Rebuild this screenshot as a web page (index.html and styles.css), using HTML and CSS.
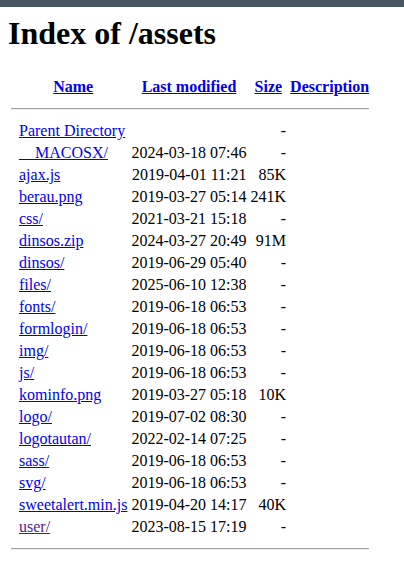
FILE: index.html
```html
<!DOCTYPE html>
<html>
<head>
<meta charset="utf-8">
<title>Index of /assets</title>
<link rel="stylesheet" href="styles.css">
</head>
<body>
<div class="topbar"></div>
<div class="page">
<h1 class="title">Index of /assets</h1>
<table class="listing">
<tr><th class="icon">&nbsp;</th><th><a href="#">Name</a></th><th><a href="#">Last modified</a></th><th><a href="#">Size</a></th><th><a href="#">Description</a></th></tr>
<tr><th class="sep" colspan="5"><hr></th></tr>
<tr><td class="icon">&nbsp;</td><td><a href="#">Parent Directory</a></td><td>&nbsp;</td><td class="r">- </td><td>&nbsp;</td></tr>
<tr><td class="icon">&nbsp;</td><td><a href="#">__MACOSX/</a></td><td class="r">2024-03-18 07:46</td><td class="r">- </td><td>&nbsp;</td></tr>
<tr><td class="icon">&nbsp;</td><td><a href="#">ajax.js</a></td><td class="r">2019-04-01 11:21</td><td class="r">85K</td><td>&nbsp;</td></tr>
<tr><td class="icon">&nbsp;</td><td><a href="#">berau.png</a></td><td class="r">2019-03-27 05:14</td><td class="r">241K</td><td>&nbsp;</td></tr>
<tr><td class="icon">&nbsp;</td><td><a href="#">css/</a></td><td class="r">2021-03-21 15:18</td><td class="r">- </td><td>&nbsp;</td></tr>
<tr><td class="icon">&nbsp;</td><td><a href="#">dinsos.zip</a></td><td class="r">2024-03-27 20:49</td><td class="r">91M</td><td>&nbsp;</td></tr>
<tr><td class="icon">&nbsp;</td><td><a href="#">dinsos/</a></td><td class="r">2019-06-29 05:40</td><td class="r">- </td><td>&nbsp;</td></tr>
<tr><td class="icon">&nbsp;</td><td><a href="#">files/</a></td><td class="r">2025-06-10 12:38</td><td class="r">- </td><td>&nbsp;</td></tr>
<tr><td class="icon">&nbsp;</td><td><a href="#">fonts/</a></td><td class="r">2019-06-18 06:53</td><td class="r">- </td><td>&nbsp;</td></tr>
<tr><td class="icon">&nbsp;</td><td><a href="#">formlogin/</a></td><td class="r">2019-06-18 06:53</td><td class="r">- </td><td>&nbsp;</td></tr>
<tr><td class="icon">&nbsp;</td><td><a href="#">img/</a></td><td class="r">2019-06-18 06:53</td><td class="r">- </td><td>&nbsp;</td></tr>
<tr><td class="icon">&nbsp;</td><td><a href="#">js/</a></td><td class="r">2019-06-18 06:53</td><td class="r">- </td><td>&nbsp;</td></tr>
<tr><td class="icon">&nbsp;</td><td><a href="#">kominfo.png</a></td><td class="r">2019-03-27 05:18</td><td class="r">10K</td><td>&nbsp;</td></tr>
<tr><td class="icon">&nbsp;</td><td><a href="#">logo/</a></td><td class="r">2019-07-02 08:30</td><td class="r">- </td><td>&nbsp;</td></tr>
<tr><td class="icon">&nbsp;</td><td><a href="#">logotautan/</a></td><td class="r">2022-02-14 07:25</td><td class="r">- </td><td>&nbsp;</td></tr>
<tr><td class="icon">&nbsp;</td><td><a href="#">sass/</a></td><td class="r">2019-06-18 06:53</td><td class="r">- </td><td>&nbsp;</td></tr>
<tr><td class="icon">&nbsp;</td><td><a href="#">svg/</a></td><td class="r">2019-06-18 06:53</td><td class="r">- </td><td>&nbsp;</td></tr>
<tr><td class="icon">&nbsp;</td><td><a href="#">sweetalert.min.js</a></td><td class="r">2019-04-20 14:17</td><td class="r">40K</td><td>&nbsp;</td></tr>
<tr><td class="icon">&nbsp;</td><td><a class="visited" href="#">user/</a></td><td class="r">2023-08-15 17:19</td><td class="r">- </td><td>&nbsp;</td></tr>
<tr><th class="sep" colspan="5"><hr></th></tr>
</table>
</div>
</body>
</html>
```
FILE: styles.css
```css
html, body {
  margin: 0;
  padding: 0;
  background: #ffffff;
}
body {
  font-family: "Liberation Serif", "Times New Roman", serif;
  font-size: 16px;
  color: #000000;
}
.topbar {
  height: 7px;
  background: #46555f;
}
.page {
  padding: 0 8px;
}
.title {
  font-size: 32px;
  font-weight: bold;
  margin: 8px 0 23px;
}
.listing a {
  color: #0000ee;
  text-decoration: underline;
}
.listing a.visited {
  color: #551a8b;
}
.listing th, .listing td {
  padding: 1px;
}
.listing th {
  text-align: center;
  font-weight: bold;
}
.listing td {
  text-align: left;
}
.listing td.r {
  text-align: right;
}
.listing hr {
  margin: 8px 0;
  border: 0;
  border-top: 1px solid #a0a0a0;
  border-bottom: 1px solid #eeeeee;
  height: 0;
}
```
